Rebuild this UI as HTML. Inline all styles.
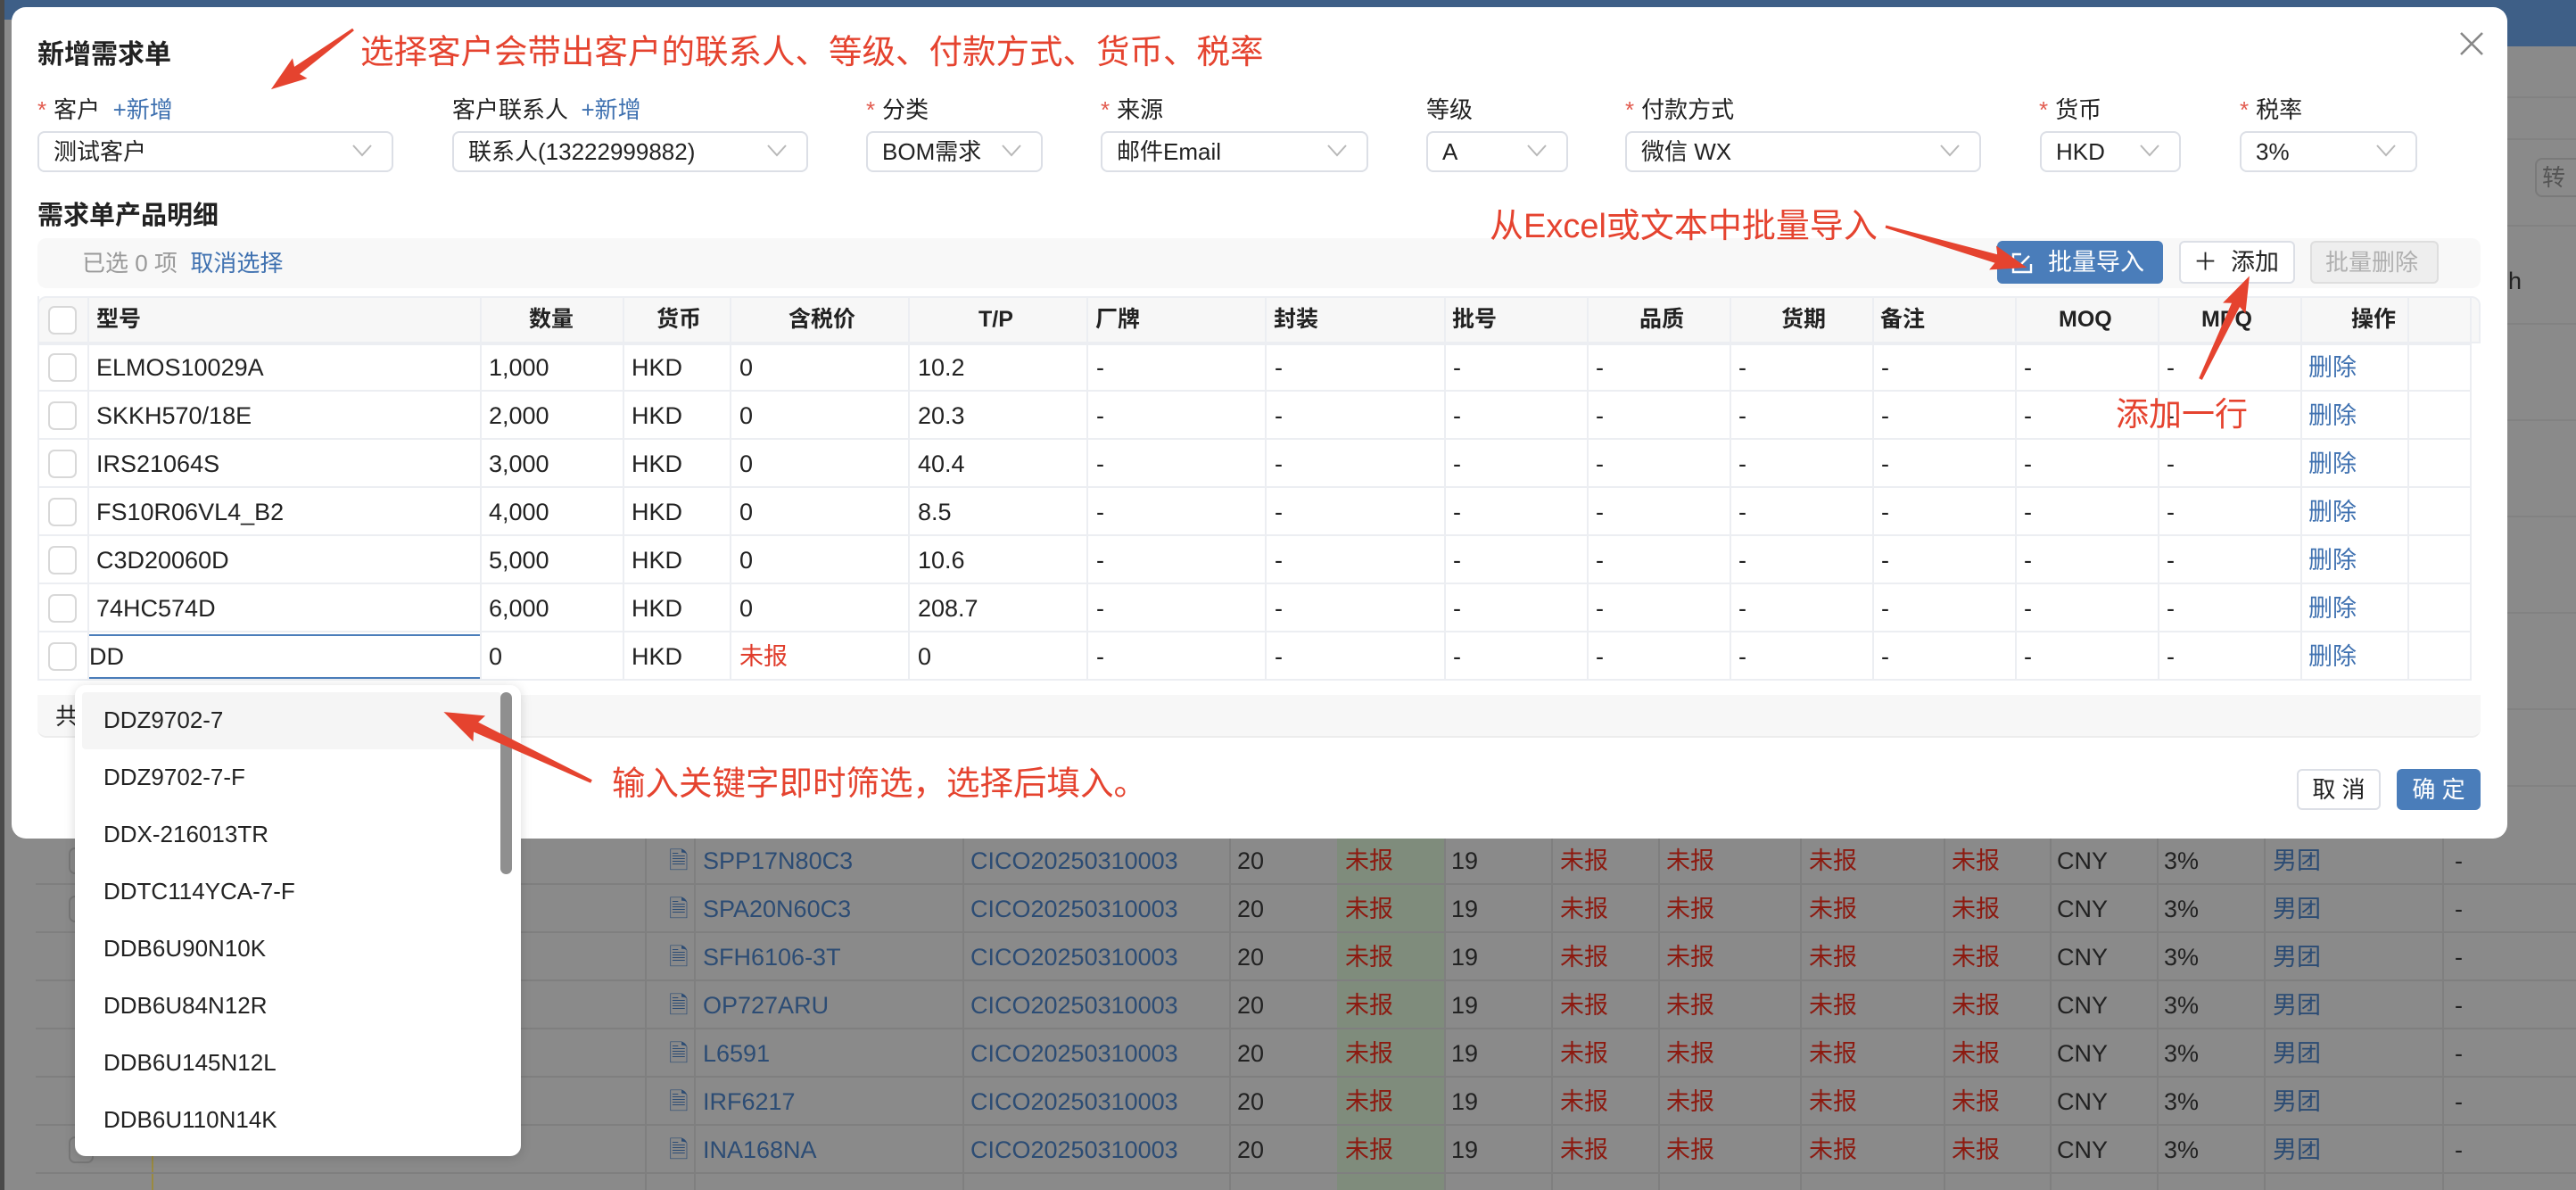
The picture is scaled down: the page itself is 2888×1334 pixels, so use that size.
<!DOCTYPE html>
<html><head><meta charset="utf-8">
<style>
*{box-sizing:border-box;margin:0;padding:0}
body{width:2888px;height:1334px;overflow:hidden;position:relative;background:#8a8a8a;font-family:"Liberation Sans","Noto Sans CJK SC",sans-serif;color:#222}
.a{position:absolute;white-space:nowrap}
.bgrow{position:absolute;left:40px;width:2848px;height:54px;border-bottom:2px solid #7f7f7f}
.bt{position:absolute;font-size:27px;line-height:54px;top:0}
.lab{font-size:26px;line-height:30px;top:108px}
.req{color:#e25a4e;margin-right:8px}
.lnk{color:#3f71b0}
.sel{position:absolute;top:147px;height:46px;border:2px solid #dcdfe6;border-radius:8px;font-size:26px;line-height:42px;padding-left:16px;background:#fff}
.sel svg{position:absolute;right:22px;top:13px}
.tbl{position:absolute;left:42px;top:332px;width:2728px}
.hd{position:absolute;left:0;top:0;height:53px;width:2739px;background:#f7f7f7;border:2px solid #eceef2;border-radius:10px 10px 0 0}
.cell{position:absolute;font-size:27px;line-height:54px}
.hcell{position:absolute;font-size:25px;font-weight:bold;line-height:53px;top:0}
.row{position:absolute;left:0;width:2728px;height:54px;border-bottom:2px solid #eceef2}
.vl{position:absolute;top:0;width:2px;background:#eceef2;height:431px}
.cb{position:absolute;left:12px;width:32px;height:32px;border:2px solid #d8d8d8;border-radius:7px;background:#fff}
.red{color:#e03c2b}
.ann{position:absolute;color:#e5432f;font-size:37px;white-space:nowrap}
.dd{position:absolute;left:116px;font-size:26px;line-height:30px}
.dz{position:absolute;font-size:27px;line-height:54px}
.del{position:absolute;font-size:27px;line-height:54px;color:#3f71b0;left:2588px}
</style></head><body>
<div class="a" style="left:0;top:0;width:2888px;height:22px;background:#3e5f87"></div>
<div class="a" style="left:2811px;top:22px;width:77px;height:30px;background:#3e5f87"></div>
<div class="a" style="left:2842px;top:177px;width:60px;height:44px;border:2px solid #7a7a7a;border-radius:8px;font-size:26px;line-height:40px;padding-left:6px;color:#555">转</div>
<div class="a" style="left:2812px;top:300px;font-size:27px;color:#222">h</div>
<div class="a" style="left:2811px;top:108px;width:77px;height:2px;background:#828282"></div>
<div class="a" style="left:2811px;top:155px;width:77px;height:2px;background:#828282"></div>
<div class="a" style="left:2811px;top:252px;width:77px;height:2px;background:#828282"></div>
<div class="a" style="left:2811px;top:362px;width:77px;height:2px;background:#828282"></div>
<div class="a" style="left:2811px;top:470px;width:77px;height:2px;background:#828282"></div>
<div class="a" style="left:2811px;top:578px;width:77px;height:2px;background:#828282"></div>
<div class="a" style="left:2811px;top:686px;width:77px;height:2px;background:#828282"></div>
<div class="a" style="left:2811px;top:794px;width:77px;height:2px;background:#828282"></div>
<div class="a" style="left:2811px;top:880px;width:77px;height:2px;background:#828282"></div>
<div class="a" style="left:0;top:0;width:5px;height:1334px;background:#4a4a4a"></div>

<div class="a" style="left:1499px;top:930px;width:120px;height:404px;background:#7f8c7c"></div>
<div class="a" style="left:170px;top:930px;width:2px;height:404px;background:#9a8a40"></div>
<div class="bgrow" style="top:938px"><span class="bt" style="left:710px;color:#2c4c74">🗎</span><span class="bt" style="left:748px;color:#2c4c74">SPP17N80C3</span><span class="bt" style="left:1048px;color:#2c4c74">CICO20250310003</span><span class="bt" style="left:1347px">20</span><span class="bt" style="left:1468px;color:#8c1a10">未报</span><span class="bt" style="left:1587px">19</span><span class="bt" style="left:1709px;color:#8c1a10">未报</span><span class="bt" style="left:1828px;color:#8c1a10">未报</span><span class="bt" style="left:1988px;color:#8c1a10">未报</span><span class="bt" style="left:2148px;color:#8c1a10">未报</span><span class="bt" style="left:2266px">CNY</span><span class="bt" style="left:2386px">3%</span><span class="bt" style="left:2508px;color:#2c4c74">男团</span><span class="bt" style="left:2712px">-</span></div>
<div class="bgrow" style="top:992px"><span class="bt" style="left:710px;color:#2c4c74">🗎</span><span class="bt" style="left:748px;color:#2c4c74">SPA20N60C3</span><span class="bt" style="left:1048px;color:#2c4c74">CICO20250310003</span><span class="bt" style="left:1347px">20</span><span class="bt" style="left:1468px;color:#8c1a10">未报</span><span class="bt" style="left:1587px">19</span><span class="bt" style="left:1709px;color:#8c1a10">未报</span><span class="bt" style="left:1828px;color:#8c1a10">未报</span><span class="bt" style="left:1988px;color:#8c1a10">未报</span><span class="bt" style="left:2148px;color:#8c1a10">未报</span><span class="bt" style="left:2266px">CNY</span><span class="bt" style="left:2386px">3%</span><span class="bt" style="left:2508px;color:#2c4c74">男团</span><span class="bt" style="left:2712px">-</span></div>
<div class="bgrow" style="top:1046px"><span class="bt" style="left:710px;color:#2c4c74">🗎</span><span class="bt" style="left:748px;color:#2c4c74">SFH6106-3T</span><span class="bt" style="left:1048px;color:#2c4c74">CICO20250310003</span><span class="bt" style="left:1347px">20</span><span class="bt" style="left:1468px;color:#8c1a10">未报</span><span class="bt" style="left:1587px">19</span><span class="bt" style="left:1709px;color:#8c1a10">未报</span><span class="bt" style="left:1828px;color:#8c1a10">未报</span><span class="bt" style="left:1988px;color:#8c1a10">未报</span><span class="bt" style="left:2148px;color:#8c1a10">未报</span><span class="bt" style="left:2266px">CNY</span><span class="bt" style="left:2386px">3%</span><span class="bt" style="left:2508px;color:#2c4c74">男团</span><span class="bt" style="left:2712px">-</span></div>
<div class="bgrow" style="top:1100px"><span class="bt" style="left:710px;color:#2c4c74">🗎</span><span class="bt" style="left:748px;color:#2c4c74">OP727ARU</span><span class="bt" style="left:1048px;color:#2c4c74">CICO20250310003</span><span class="bt" style="left:1347px">20</span><span class="bt" style="left:1468px;color:#8c1a10">未报</span><span class="bt" style="left:1587px">19</span><span class="bt" style="left:1709px;color:#8c1a10">未报</span><span class="bt" style="left:1828px;color:#8c1a10">未报</span><span class="bt" style="left:1988px;color:#8c1a10">未报</span><span class="bt" style="left:2148px;color:#8c1a10">未报</span><span class="bt" style="left:2266px">CNY</span><span class="bt" style="left:2386px">3%</span><span class="bt" style="left:2508px;color:#2c4c74">男团</span><span class="bt" style="left:2712px">-</span></div>
<div class="bgrow" style="top:1154px"><span class="bt" style="left:710px;color:#2c4c74">🗎</span><span class="bt" style="left:748px;color:#2c4c74">L6591</span><span class="bt" style="left:1048px;color:#2c4c74">CICO20250310003</span><span class="bt" style="left:1347px">20</span><span class="bt" style="left:1468px;color:#8c1a10">未报</span><span class="bt" style="left:1587px">19</span><span class="bt" style="left:1709px;color:#8c1a10">未报</span><span class="bt" style="left:1828px;color:#8c1a10">未报</span><span class="bt" style="left:1988px;color:#8c1a10">未报</span><span class="bt" style="left:2148px;color:#8c1a10">未报</span><span class="bt" style="left:2266px">CNY</span><span class="bt" style="left:2386px">3%</span><span class="bt" style="left:2508px;color:#2c4c74">男团</span><span class="bt" style="left:2712px">-</span></div>
<div class="bgrow" style="top:1208px"><span class="bt" style="left:710px;color:#2c4c74">🗎</span><span class="bt" style="left:748px;color:#2c4c74">IRF6217</span><span class="bt" style="left:1048px;color:#2c4c74">CICO20250310003</span><span class="bt" style="left:1347px">20</span><span class="bt" style="left:1468px;color:#8c1a10">未报</span><span class="bt" style="left:1587px">19</span><span class="bt" style="left:1709px;color:#8c1a10">未报</span><span class="bt" style="left:1828px;color:#8c1a10">未报</span><span class="bt" style="left:1988px;color:#8c1a10">未报</span><span class="bt" style="left:2148px;color:#8c1a10">未报</span><span class="bt" style="left:2266px">CNY</span><span class="bt" style="left:2386px">3%</span><span class="bt" style="left:2508px;color:#2c4c74">男团</span><span class="bt" style="left:2712px">-</span></div>
<div class="bgrow" style="top:1262px"><span class="bt" style="left:710px;color:#2c4c74">🗎</span><span class="bt" style="left:748px;color:#2c4c74">INA168NA</span><span class="bt" style="left:1048px;color:#2c4c74">CICO20250310003</span><span class="bt" style="left:1347px">20</span><span class="bt" style="left:1468px;color:#8c1a10">未报</span><span class="bt" style="left:1587px">19</span><span class="bt" style="left:1709px;color:#8c1a10">未报</span><span class="bt" style="left:1828px;color:#8c1a10">未报</span><span class="bt" style="left:1988px;color:#8c1a10">未报</span><span class="bt" style="left:2148px;color:#8c1a10">未报</span><span class="bt" style="left:2266px">CNY</span><span class="bt" style="left:2386px">3%</span><span class="bt" style="left:2508px;color:#2c4c74">男团</span><span class="bt" style="left:2712px">-</span></div>
<div class="a" style="left:723px;top:938px;width:2px;height:396px;background:#7f7f7f"></div>
<div class="a" style="left:778px;top:938px;width:2px;height:396px;background:#7f7f7f"></div>
<div class="a" style="left:1079px;top:938px;width:2px;height:396px;background:#7f7f7f"></div>
<div class="a" style="left:1378px;top:938px;width:2px;height:396px;background:#7f7f7f"></div>
<div class="a" style="left:1619px;top:938px;width:2px;height:396px;background:#7f7f7f"></div>
<div class="a" style="left:1739px;top:938px;width:2px;height:396px;background:#7f7f7f"></div>
<div class="a" style="left:1859px;top:938px;width:2px;height:396px;background:#7f7f7f"></div>
<div class="a" style="left:2018px;top:938px;width:2px;height:396px;background:#7f7f7f"></div>
<div class="a" style="left:2179px;top:938px;width:2px;height:396px;background:#7f7f7f"></div>
<div class="a" style="left:2298px;top:938px;width:2px;height:396px;background:#7f7f7f"></div>
<div class="a" style="left:2418px;top:938px;width:2px;height:396px;background:#7f7f7f"></div>
<div class="a" style="left:2538px;top:938px;width:2px;height:396px;background:#7f7f7f"></div>
<div class="a" style="left:2738px;top:938px;width:2px;height:396px;background:#7f7f7f"></div>
<div class="a" style="left:77px;top:950px;width:28px;height:30px;border:2px solid #777;border-radius:7px"></div>
<div class="a" style="left:77px;top:1004px;width:28px;height:30px;border:2px solid #777;border-radius:7px"></div>
<div class="a" style="left:77px;top:1274px;width:28px;height:30px;border:2px solid #777;border-radius:7px"></div>

<div class="a" style="left:13px;top:8px;width:2798px;height:932px;background:#fff;border-radius:16px"></div>
<div class="a" style="left:42px;top:45px;font-size:30px;font-weight:bold;line-height:34px">新增需求单</div>
<svg class="a" style="left:2756px;top:34px" width="30" height="30" viewBox="0 0 30 30"><path d="M3 3 L27 27 M27 3 L3 27" stroke="#888" stroke-width="2.6" fill="none"/></svg>

<div class="a lab" style="left:42px"><span class="req">*</span>客户 <span class="lnk">&nbsp;+新增</span></div>
<div class="a lab" style="left:507px">客户联系人 <span class="lnk">&nbsp;+新增</span></div>
<div class="a lab" style="left:971px"><span class="req">*</span>分类</div>
<div class="a lab" style="left:1234px"><span class="req">*</span>来源</div>
<div class="a lab" style="left:1599px">等级</div>
<div class="a lab" style="left:1822px"><span class="req">*</span>付款方式</div>
<div class="a lab" style="left:2286px"><span class="req">*</span>货币</div>
<div class="a lab" style="left:2511px"><span class="req">*</span>税率</div>

<div class="sel" style="left:42px;width:399px">测试客户<svg width="22" height="14"><path d="M1 1 L11 12 L21 1" stroke="#b8b8b8" stroke-width="2" fill="none"/></svg></div>
<div class="sel" style="left:507px;width:399px">联系人(13222999882)<svg width="22" height="14"><path d="M1 1 L11 12 L21 1" stroke="#b8b8b8" stroke-width="2" fill="none"/></svg></div>
<div class="sel" style="left:971px;width:198px">BOM需求<svg width="22" height="14"><path d="M1 1 L11 12 L21 1" stroke="#b8b8b8" stroke-width="2" fill="none"/></svg></div>
<div class="sel" style="left:1234px;width:300px">邮件Email<svg width="22" height="14"><path d="M1 1 L11 12 L21 1" stroke="#b8b8b8" stroke-width="2" fill="none"/></svg></div>
<div class="sel" style="left:1599px;width:159px">A<svg width="22" height="14"><path d="M1 1 L11 12 L21 1" stroke="#b8b8b8" stroke-width="2" fill="none"/></svg></div>
<div class="sel" style="left:1822px;width:399px">微信 WX<svg width="22" height="14"><path d="M1 1 L11 12 L21 1" stroke="#b8b8b8" stroke-width="2" fill="none"/></svg></div>
<div class="sel" style="left:2287px;width:158px">HKD<svg width="22" height="14"><path d="M1 1 L11 12 L21 1" stroke="#b8b8b8" stroke-width="2" fill="none"/></svg></div>
<div class="sel" style="left:2511px;width:199px">3%<svg width="22" height="14"><path d="M1 1 L11 12 L21 1" stroke="#b8b8b8" stroke-width="2" fill="none"/></svg></div>

<div class="a" style="left:42px;top:225px;font-size:29px;font-weight:bold;line-height:34px">需求单产品明细</div>

<div class="a" style="left:42px;top:267px;width:2739px;height:56px;background:#f8f8f8;border-radius:10px"></div>
<div class="a" style="left:92px;top:278px;font-size:26px;line-height:34px;color:#999">已选 0 项 <span class="lnk">&nbsp;取消选择</span></div>
<div class="a" style="left:2239px;top:270px;width:186px;height:48px;background:#4a7dba;border-radius:6px;color:#fff;font-size:27px;line-height:48px;padding-left:57px">批量导入</div>
<svg class="a" style="left:2254px;top:282px" width="26" height="26" viewBox="0 0 26 26"><path d="M12 3 H3 V23 H23 V14" stroke="#fff" stroke-width="2.4" fill="none"/><path d="M10 16 L21 5" stroke="#fff" stroke-width="2.4" fill="none"/></svg>
<div class="a" style="left:2443px;top:270px;width:130px;height:48px;background:#fff;border:2px solid #dcdfe6;border-radius:6px;font-size:27px;line-height:44px;padding-left:14px">＋&nbsp;&nbsp;添加</div>
<div class="a" style="left:2590px;top:270px;width:144px;height:48px;background:#eeeeee;border:2px solid #dedede;border-radius:6px;font-size:26px;line-height:44px;padding-left:15px;color:#b0b0b0">批量删除</div>

<div class="tbl">
<div class="hd"></div>
<div class="cb" style="top:11px"></div>
<div class="hcell" style="left:66px">型号</div>
<div class="hcell" style="left:551px">数量</div>
<div class="hcell" style="left:694px">货币</div>
<div class="hcell" style="left:842px">含税价</div>
<div class="hcell" style="left:1055px">T/P</div>
<div class="hcell" style="left:1186px">厂牌</div>
<div class="hcell" style="left:1386px">封装</div>
<div class="hcell" style="left:1586px">批号</div>
<div class="hcell" style="left:1796px">品质</div>
<div class="hcell" style="left:1955px">货期</div>
<div class="hcell" style="left:2066px">备注</div>
<div class="hcell" style="left:2266px">MOQ</div>
<div class="hcell" style="left:2426px">MPQ</div>
<div class="hcell" style="left:2594px">操作</div>
<div class="row" style="top:53px;border-top:2px solid #eceef2"></div>
<div class="row" style="top:107px"></div>
<div class="row" style="top:161px"></div>
<div class="row" style="top:215px"></div>
<div class="row" style="top:269px"></div>
<div class="row" style="top:323px"></div>
<div class="row" style="top:377px;background:#fff"></div>
<div class="vl" style="left:0"></div>
<div class="vl" style="left:56px"></div>
<div class="vl" style="left:496px"></div>
<div class="vl" style="left:656px"></div>
<div class="vl" style="left:776px"></div>
<div class="vl" style="left:976px"></div>
<div class="vl" style="left:1176px"></div>
<div class="vl" style="left:1376px"></div>
<div class="vl" style="left:1577px"></div>
<div class="vl" style="left:1737px"></div>
<div class="vl" style="left:1897px"></div>
<div class="vl" style="left:2057px"></div>
<div class="vl" style="left:2217px"></div>
<div class="vl" style="left:2377px"></div>
<div class="vl" style="left:2537px"></div>
<div class="vl" style="left:2657px"></div>
<div class="vl" style="left:2727px"></div>
</div>
<div class="cb" style="left:54px;top:396px"></div>
<div class="cb" style="left:54px;top:450px"></div>
<div class="cb" style="left:54px;top:504px"></div>
<div class="cb" style="left:54px;top:558px"></div>
<div class="cb" style="left:54px;top:612px"></div>
<div class="cb" style="left:54px;top:666px"></div>
<div class="cb" style="left:54px;top:720px"></div>

<div class="cell a" style="left:108px;top:385px">ELMOS10029A</div><div class="cell a" style="left:548px;top:385px">1,000</div><div class="cell a" style="left:708px;top:385px">HKD</div><div class="cell a" style="left:829px;top:385px">0</div><div class="cell a" style="left:1029px;top:385px">10.2</div>
<div class="cell a" style="left:108px;top:439px">SKKH570/18E</div><div class="cell a" style="left:548px;top:439px">2,000</div><div class="cell a" style="left:708px;top:439px">HKD</div><div class="cell a" style="left:829px;top:439px">0</div><div class="cell a" style="left:1029px;top:439px">20.3</div>
<div class="cell a" style="left:108px;top:493px">IRS21064S</div><div class="cell a" style="left:548px;top:493px">3,000</div><div class="cell a" style="left:708px;top:493px">HKD</div><div class="cell a" style="left:829px;top:493px">0</div><div class="cell a" style="left:1029px;top:493px">40.4</div>
<div class="cell a" style="left:108px;top:547px">FS10R06VL4_B2</div><div class="cell a" style="left:548px;top:547px">4,000</div><div class="cell a" style="left:708px;top:547px">HKD</div><div class="cell a" style="left:829px;top:547px">0</div><div class="cell a" style="left:1029px;top:547px">8.5</div>
<div class="cell a" style="left:108px;top:601px">C3D20060D</div><div class="cell a" style="left:548px;top:601px">5,000</div><div class="cell a" style="left:708px;top:601px">HKD</div><div class="cell a" style="left:829px;top:601px">0</div><div class="cell a" style="left:1029px;top:601px">10.6</div>
<div class="cell a" style="left:108px;top:655px">74HC574D</div><div class="cell a" style="left:548px;top:655px">6,000</div><div class="cell a" style="left:708px;top:655px">HKD</div><div class="cell a" style="left:829px;top:655px">0</div><div class="cell a" style="left:1029px;top:655px">208.7</div>
<div class="a" style="left:100px;top:711px;width:438px;height:50px;border-top:2px solid #4a7dba;border-bottom:2px solid #4a7dba"></div>
<div class="cell a" style="left:100px;top:709px">DD</div><div class="cell a" style="left:548px;top:709px">0</div><div class="cell a" style="left:708px;top:709px">HKD</div><div class="cell a red" style="left:829px;top:709px">未报</div><div class="cell a" style="left:1029px;top:709px">0</div>

<div class="dz" style="left:1229px;top:385px">-</div><div class="dz" style="left:1429px;top:385px">-</div><div class="dz" style="left:1629px;top:385px">-</div><div class="dz" style="left:1789px;top:385px">-</div><div class="dz" style="left:1949px;top:385px">-</div><div class="dz" style="left:2109px;top:385px">-</div><div class="dz" style="left:2269px;top:385px">-</div><div class="dz" style="left:2429px;top:385px">-</div><div class="del" style="top:385px">删除</div>
<div class="dz" style="left:1229px;top:439px">-</div><div class="dz" style="left:1429px;top:439px">-</div><div class="dz" style="left:1629px;top:439px">-</div><div class="dz" style="left:1789px;top:439px">-</div><div class="dz" style="left:1949px;top:439px">-</div><div class="dz" style="left:2109px;top:439px">-</div><div class="dz" style="left:2269px;top:439px">-</div><div class="dz" style="left:2429px;top:439px">-</div><div class="del" style="top:439px">删除</div>
<div class="dz" style="left:1229px;top:493px">-</div><div class="dz" style="left:1429px;top:493px">-</div><div class="dz" style="left:1629px;top:493px">-</div><div class="dz" style="left:1789px;top:493px">-</div><div class="dz" style="left:1949px;top:493px">-</div><div class="dz" style="left:2109px;top:493px">-</div><div class="dz" style="left:2269px;top:493px">-</div><div class="dz" style="left:2429px;top:493px">-</div><div class="del" style="top:493px">删除</div>
<div class="dz" style="left:1229px;top:547px">-</div><div class="dz" style="left:1429px;top:547px">-</div><div class="dz" style="left:1629px;top:547px">-</div><div class="dz" style="left:1789px;top:547px">-</div><div class="dz" style="left:1949px;top:547px">-</div><div class="dz" style="left:2109px;top:547px">-</div><div class="dz" style="left:2269px;top:547px">-</div><div class="dz" style="left:2429px;top:547px">-</div><div class="del" style="top:547px">删除</div>
<div class="dz" style="left:1229px;top:601px">-</div><div class="dz" style="left:1429px;top:601px">-</div><div class="dz" style="left:1629px;top:601px">-</div><div class="dz" style="left:1789px;top:601px">-</div><div class="dz" style="left:1949px;top:601px">-</div><div class="dz" style="left:2109px;top:601px">-</div><div class="dz" style="left:2269px;top:601px">-</div><div class="dz" style="left:2429px;top:601px">-</div><div class="del" style="top:601px">删除</div>
<div class="dz" style="left:1229px;top:655px">-</div><div class="dz" style="left:1429px;top:655px">-</div><div class="dz" style="left:1629px;top:655px">-</div><div class="dz" style="left:1789px;top:655px">-</div><div class="dz" style="left:1949px;top:655px">-</div><div class="dz" style="left:2109px;top:655px">-</div><div class="dz" style="left:2269px;top:655px">-</div><div class="dz" style="left:2429px;top:655px">-</div><div class="del" style="top:655px">删除</div>
<div class="dz" style="left:1229px;top:709px">-</div><div class="dz" style="left:1429px;top:709px">-</div><div class="dz" style="left:1629px;top:709px">-</div><div class="dz" style="left:1789px;top:709px">-</div><div class="dz" style="left:1949px;top:709px">-</div><div class="dz" style="left:2109px;top:709px">-</div><div class="dz" style="left:2269px;top:709px">-</div><div class="dz" style="left:2429px;top:709px">-</div><div class="del" style="top:709px">删除</div>

<div class="a" style="left:42px;top:779px;width:2739px;height:48px;background:#f7f7f7;border-radius:0 0 10px 10px;border-bottom:2px solid #ececec"></div>
<div class="a" style="left:62px;top:786px;font-size:26px;line-height:34px">共</div>
<div class="a" style="left:2575px;top:862px;width:94px;height:46px;border:2px solid #dcdfe6;border-radius:6px;font-size:26px;line-height:42px;text-align:center;background:#fff">取 消</div>
<div class="a" style="left:2687px;top:862px;width:94px;height:46px;background:#4a7dba;border-radius:6px;font-size:26px;line-height:46px;text-align:center;color:#fff">确 定</div>

<div class="a" style="left:84px;top:768px;width:500px;height:528px;background:#fff;border-radius:12px;box-shadow:0 2px 12px rgba(0,0,0,0.15)"></div>
<div class="a" style="left:92px;top:776px;width:470px;height:64px;background:#f5f5f5;border-radius:4px"></div>
<div class="a" style="left:561px;top:776px;width:13px;height:204px;background:#8f8f8f;border-radius:7px"></div>
<div class="dd" style="top:792px">DDZ9702-7</div>
<div class="dd" style="top:856px">DDZ9702-7-F</div>
<div class="dd" style="top:920px">DDX-216013TR</div>
<div class="dd" style="top:984px">DDTC114YCA-7-F</div>
<div class="dd" style="top:1048px">DDB6U90N10K</div>
<div class="dd" style="top:1112px">DDB6U84N12R</div>
<div class="dd" style="top:1176px">DDB6U145N12L</div>
<div class="dd" style="top:1240px">DDB6U110N14K</div>

<div class="ann" style="left:404px;top:27px;font-size:37.5px">选择客户会带出客户的联系人、等级、付款方式、货币、税率</div>
<div class="ann" style="left:1670px;top:222px;font-size:38px">从Excel或文本中批量导入</div>
<div class="ann" style="left:2372px;top:434px">添加一行</div>
<div class="ann" style="left:686px;top:847px;font-size:37.5px">输入关键字即时筛选，选择后填入。</div>
<svg class="a" style="left:0;top:0" width="2888" height="1334">
<g fill="#e5432f">
<polygon transform="translate(396,33) rotate(143.9)" points="0,-1.5 78,-5 74,-14 114,0 74,14 78,5 0,1.5"/>
<polygon transform="translate(2114,254) rotate(16.2)" points="0,-1.5 129,-5 125,-14 165,0 125,14 129,5 0,1.5"/>
<polygon transform="translate(2467,425) rotate(-64.6)" points="0,-2 92,-5 88,-14 128,0 88,14 92,5 0,2"/>
<polygon transform="translate(663,876) rotate(-154.8)" points="0,-2 143,-6 139,-16 183,0 139,16 143,6 0,2"/>
</g>
</svg>
</body></html>
